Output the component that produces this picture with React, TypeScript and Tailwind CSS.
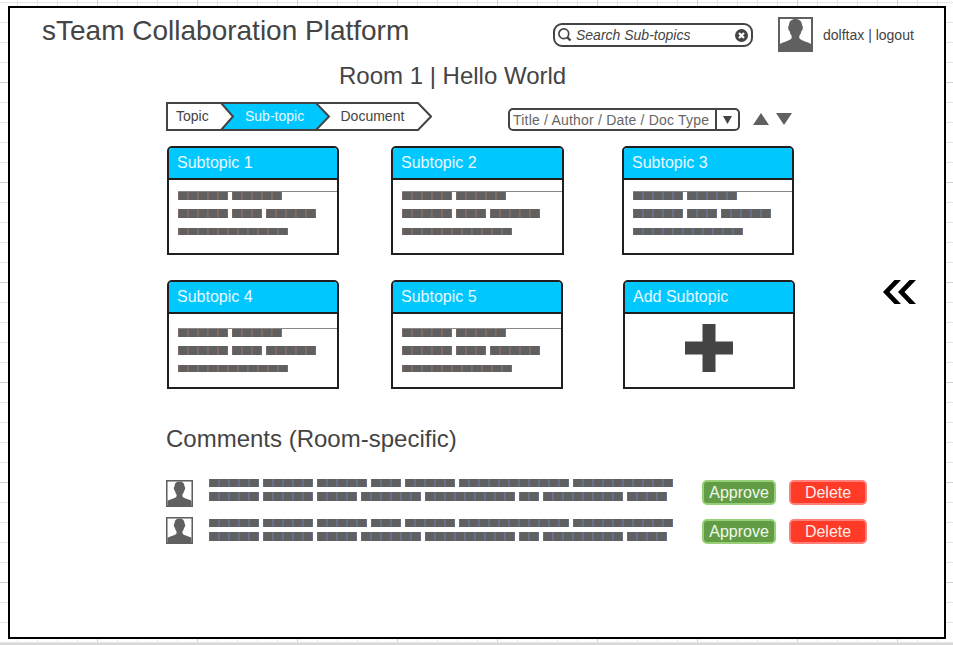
import React from "react";

const cardLines = [[5, 5], [5, 3, 5], [11]];
const commentLines = [
  [5, 5, 5, 3, 5, 11, 10],
  [5, 5, 4, 6, 9, 2, 8, 4],
];

/* A line of placeholder words, ten pixels per letter */
function Line({ words, className }: { words: number[]; className: string }) {
  return (
    <div className={`flex gap-1 ${className}`}>
      {words.map((n, i) => (
        <div
          key={i}
          className="h-full bg-[repeating-linear-gradient(90deg,#7c6a62_0px,#7c6a62_1px,#606060_1px,#606060_9px,#65718d_9px,#65718d_10px)]"
          style={{ width: n * 10 }}
        />
      ))}
    </div>
  );
}

function Avatar({ className }: { className: string }) {
  return (
    <svg viewBox="0 0 35 35" className={`block shrink-0 ${className}`}>
      <rect width="35" height="35" fill="#606060" />
      <rect x="2" y="2" width="31" height="31" fill="#fff" />
      <path
        fill="#606060"
        d="M17.5 2C13.5 2 11 4.300 11 8.300L10.200 9.500C9.900 11.500 10.500 13.500 11.700 14.300C12 16.500 12.800 17.800 13.700 18.800V21C12.500 23.800 5 25 2 27V34H33V27C30 25 22.500 23.800 21.300 21V18.800C22.200 17.800 23 16.500 23.300 14.300C24.500 13.500 25.100 11.500 24.800 9.500L24 8.300C24 4.300 21.500 2 17.500 2Z"
      />
    </svg>
  );
}

function Card({ title, className, bodyClass, children }: { title: string; className: string; bodyClass: string; children?: React.ReactNode }) {
  return (
    <div className={`h-[109px] shrink-0 rounded-t-[5px] border-2 border-[#221e1f] ${className}`}>
      <div className="h-8 rounded-t-[3px] border-b-2 border-[#221e1f] bg-[#00c8ff] pl-2 text-base leading-[29px] text-[#e8f8ff]">{title}</div>
      <div className={bodyClass}>
        {children ?? (
          <div className="pl-[9px]">
            <Line words={cardLines[0]} className="h-[9px] border-t border-[#888]" />
            <Line words={cardLines[1]} className="mt-[9px] h-[9px]" />
            <Line words={cardLines[2]} className="mt-[10px] h-[7px]" />
          </div>
        )}
      </div>
    </div>
  );
}

function Comment({ avatarTop, buttonTop }: { avatarTop: string; buttonTop: string }) {
  return (
    <div className="flex h-10 items-start">
      <Avatar className={`size-[27px] ${avatarTop}`} />
      <div className="ml-4 w-[493px]">
        <Line words={commentLines[0]} className="h-2" />
        <Line words={commentLines[1]} className="mt-[5px] h-[9px]" />
      </div>
      <button className={`h-[25px] w-[74px] rounded-[5px] border-2 border-[#97d077] bg-[#629d46] text-base leading-[21px] text-[#f0f8ec] ${buttonTop}`}>Approve</button>
      <button className={`ml-[13px] h-[25px] w-[78px] rounded-[5px] border-2 border-[#ff8078] bg-[#ff3a26] text-base leading-[21px] text-[#ffecea] ${buttonTop}`}>Delete</button>
    </div>
  );
}

function Grid() {
  return (
    <svg className="absolute inset-0" width="953" height="645" shapeRendering="crispEdges">
      {Array.from({ length: 47 }, (_, i) => (
        <rect key={`v${i}`} x={17 + i * 20} y="0" width="1" height="642" fill={i % 5 === 4 ? "#d0d0d0" : "#e6e6e6"} />
      ))}
      {Array.from({ length: 33 }, (_, i) => (
        <rect key={`h${i}`} x="0" y={2 + i * 20} width="953" height="1" fill={i % 5 === 4 ? "#d0d0d0" : "#e6e6e6"} />
      ))}
      <rect x="0" y="643" width="953" height="2" fill="#d8d8d8" />
    </svg>
  );
}

export default function App() {
  return (
    <div className="relative h-[645px] w-[953px] overflow-hidden bg-white pl-2 pt-1.5 font-['Liberation_Sans',Arial,sans-serif] text-[#444]">
      <Grid />
      <main className="relative h-[633px] w-[938px] border-2 border-black bg-white">
        <header className="flex h-11 items-start pl-8">
          <h1 className="w-[511px] pt-[7px] text-[28px] leading-8">sTeam Collaboration Platform</h1>
          <div className="mt-[15px] flex h-6 w-[200px] items-center rounded-[9px] border-2 border-[#444] pl-[3px] pr-[3px]">
            <svg width="14" height="14" viewBox="0 0 14 14" fill="none" stroke="#444" className="shrink-0">
              <circle cx="5.800" cy="5.800" r="4.900" strokeWidth="1.700" />
              <path d="M9.300 9.300L12.500 12.500" strokeWidth="2.400" />
            </svg>
            <span className="ml-1 flex-1 whitespace-nowrap text-sm italic leading-5">Search Sub-topics</span>
            <svg width="13" height="13" viewBox="0 0 13 13" className="shrink-0">
              <circle cx="6.500" cy="6.500" r="6.500" fill="#444" />
              <path d="M4 4L9 9M9 4L4 9" stroke="#fff" strokeWidth="2.200" />
            </svg>
          </div>
          <Avatar className="ml-[25px] mt-[9px] size-[35px]" />
          <span className="ml-2.5 mt-[17px] whitespace-nowrap text-sm leading-5">dolftax | logout</span>
        </header>

        <h2 className="mt-2.5 pl-[329px] text-2xl leading-7">Room 1 | Hello World</h2>

        <div className="mt-3 flex h-[29px] pl-[156px]">
          <nav className="relative w-[266px] shrink-0">
            <svg className="absolute inset-0" width="266" height="29" stroke="#444" strokeWidth="2">
              <path d="M1 1H252L265 14.500L252 28H1Z" fill="#fff" />
              <path d="M55 1H150L163 14.500L150 28H55L67 14.500Z" fill="#00c8ff" />
            </svg>
            <div className="relative flex whitespace-nowrap text-sm leading-[29px]">
              <span className="w-[69px] pl-2.5">Topic</span>
              <span className="w-24 pl-2.5 text-[#e8f8ff]">Sub-topic</span>
              <span className="pl-[9.500px]">Document</span>
            </div>
          </nav>
          <div className="ml-[76px] mt-1.5 flex h-[23px] w-[232px] rounded-[5px] border-2 border-[#444]">
            <span className="w-[205px] whitespace-nowrap pl-[3px] text-sm leading-5 text-[#666] tracking-[0.2px]">Title / Author / Date / Doc Type</span>
            <div className="flex flex-1 items-center justify-center border-l-2 border-[#444]">
              <svg width="9" height="8"><path d="M0 0H9L4.500 8Z" fill="#444" /></svg>
            </div>
          </div>
          <svg width="40" height="12" className="ml-[13px] mt-[11px]" fill="#606060">
            <path d="M0 12L8 0L16 12ZM23 0H39L31 12Z" />
          </svg>
        </div>

        <section className="mt-[15px] flex pl-[157px]">
          <Card title="Subtopic 1" className="w-[172px]" bodyClass="pt-[11px]" />
          <Card title="Subtopic 2" className="ml-[52px] w-[173px]" bodyClass="pt-[11px]" />
          <Card title="Subtopic 3" className="ml-[58px] w-[172px]" bodyClass="pt-[11px]" />
        </section>
        <section className="mt-[25px] flex pl-[157px]">
          <Card title="Subtopic 4" className="w-[172px]" bodyClass="pt-[14px]" />
          <Card title="Subtopic 5" className="ml-[52px] w-[172px]" bodyClass="pt-[14px]" />
          <Card title="Add Subtopic" className="ml-[60px] w-[172px]" bodyClass="pl-[60px] pt-[10px]">
            <svg width="48" height="48"><path d="M17.500 0H30.500V17.500H48V30.500H30.500V48H17.500V30.500H0V17.500H17.500Z" fill="#444" /></svg>
          </Card>
          <svg width="33" height="24" className="ml-[88px]">
            <path d="M11.500 0H18L6.500 12L18 24H11.500L0 12ZM26.500 0H33L21.500 12L33 24H26.500L15 12Z" fill="#000" />
          </svg>
        </section>

        <section className="pl-[156px] pt-9">
          <h2 className="h-[54px] text-2xl leading-7">Comments (Room-specific)</h2>
          <Comment avatarTop="mt-px" buttonTop="mt-px" />
          <Comment avatarTop="-mt-0.5" buttonTop="mt-0" />
        </section>
      </main>
    </div>
  );
}
